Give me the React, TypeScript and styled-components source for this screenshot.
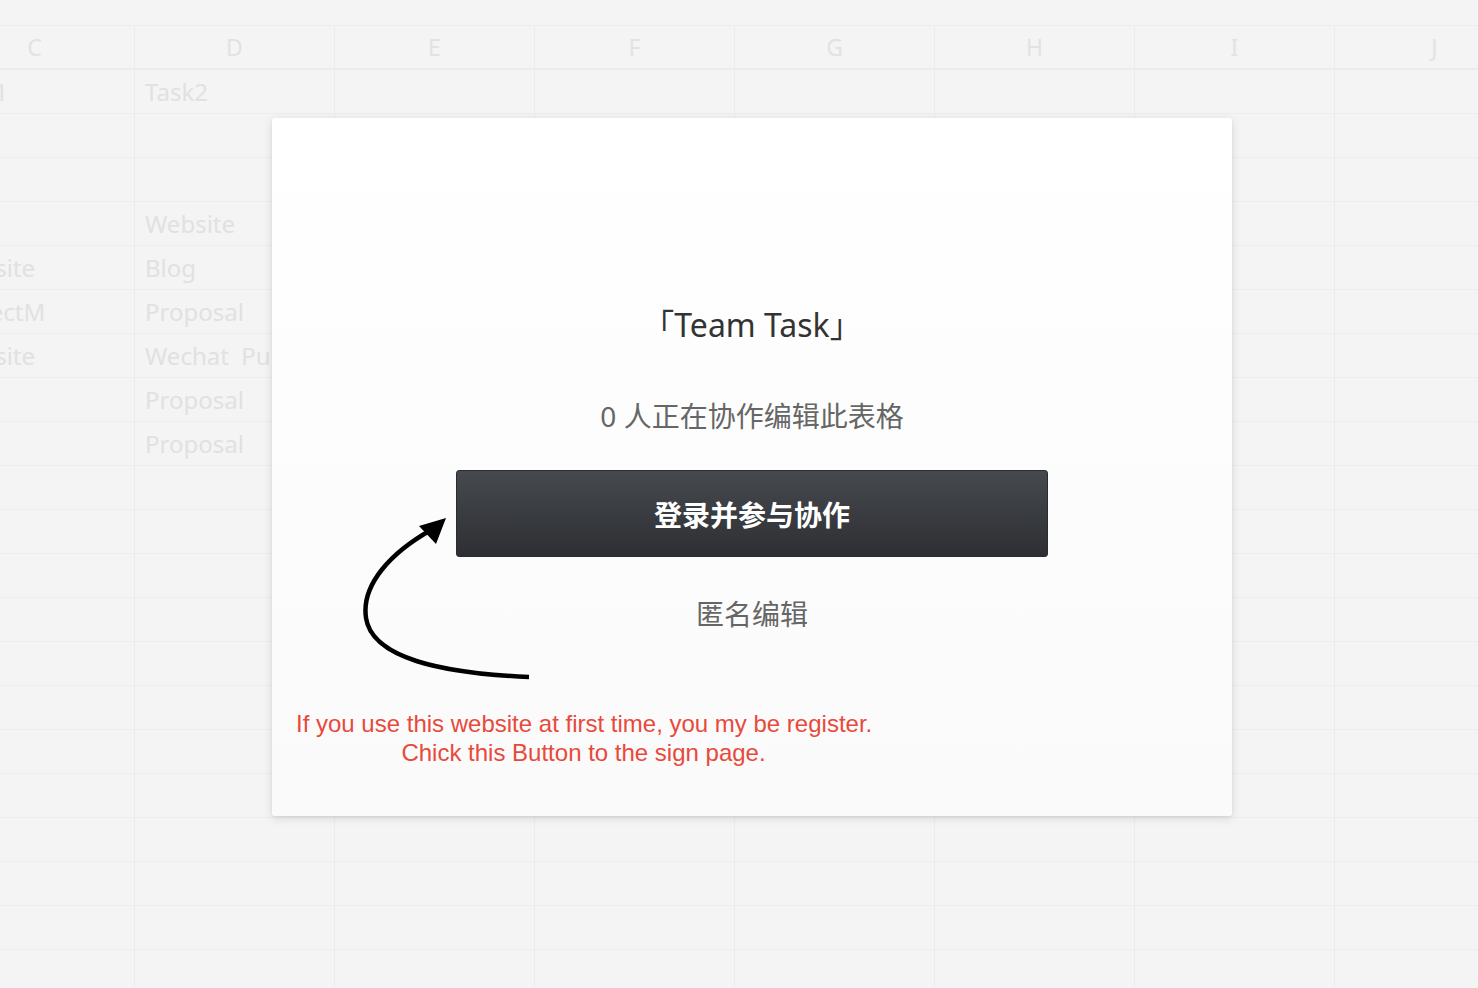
import React from "react";
import styled, { createGlobalStyle } from "styled-components";

const GlobalStyle = createGlobalStyle`
  html, body {
    margin: 0;
    padding: 0;
    background: #f4f4f4;
    overflow: hidden;
  }
  #root {
    width: 1478px;
    height: 988px;
  }
`;

const Page = styled.div`
  position: relative;
  width: 1478px;
  height: 988px;
  overflow: hidden;
  background: #f4f4f4;
  font-family: "Noto Sans", "Noto Sans CJK SC", sans-serif;
`;

const Sheet = styled.div`
  display: flex;
  flex-direction: column;
  margin-left: -65px;
  width: 1600px;
`;

const TopBar = styled.div`
  height: 25px;
  border-bottom: 1px solid #ededed;
  background: #f4f4f4;
`;

const HeaderRow = styled.div`
  display: grid;
  grid-template-columns: repeat(8, 200px);
  height: 42px;
  border-bottom: 2px solid #ebebeb;
`;

const HeaderCell = styled.div`
  display: flex;
  align-items: center;
  justify-content: center;
  border-right: 1px solid #ececec;
  color: #e2e2e2;
  font-size: 23px;
`;

const Row = styled.div`
  display: grid;
  grid-template-columns: repeat(8, 200px);
  height: 43px;
  border-bottom: 1px solid #ededed;
`;

const Cell = styled.div`
  display: flex;
  align-items: center;
  padding-left: 10px;
  border-right: 1px solid #ececec;
  color: #e1e1e1;
  font-size: 24px;
  white-space: pre;
  overflow: hidden;
`;

const Modal = styled.div`
  position: absolute;
  left: 272px;
  top: 118px;
  width: 960px;
  height: 698px;
  box-sizing: border-box;
  border-radius: 3px;
  background: linear-gradient(180deg, #ffffff 0%, #fafafa 100%);
  box-shadow: 0 2px 10px rgba(0, 0, 0, 0.13), 0 1px 2px rgba(0, 0, 0, 0.06);
  display: flex;
  flex-direction: column;
  align-items: center;
  padding-top: 187px;
  font-family: "Noto Sans", "Noto Sans CJK SC", sans-serif;
`;

const Title = styled.div`
  font-size: 32px;
  line-height: 40px;
  color: #333;
`;

const Subtitle = styled.div`
  margin-top: 51px;
  font-size: 28px;
  line-height: 40px;
  color: #666;
`;

const PrimaryButton = styled.button`
  margin-top: 34px;
  width: 592px;
  height: 87px;
  border: 1px solid #2a2c30;
  border-radius: 3px;
  background: linear-gradient(180deg, #46494e 0%, #2d2f33 100%);
  color: #fff;
  font-family: "Noto Sans CJK SC", sans-serif;
  font-size: 28px;
  font-weight: 700;
  letter-spacing: 0;
  cursor: pointer;
`;

const Anonymous = styled.div`
  margin-top: 37px;
  font-size: 28px;
  line-height: 40px;
  color: #666;
`;

const Note = styled.div`
  align-self: flex-start;
  margin-left: 24px;
  margin-top: 75px;
  width: 575px;
  text-align: center;
  font-family: "Liberation Sans", Arial, sans-serif;
  font-size: 24px;
  line-height: 29px;
  color: #e8493b;
  white-space: nowrap;
`;

const ArrowLayer = styled.svg`
  position: absolute;
  left: 0;
  top: 0;
  width: 1478px;
  height: 988px;
  pointer-events: none;
`;

const columns = ["C", "D", "E", "F", "G", "H", "I", "J"];

const cellData: Record<number, [string, string]> = {
  0: ["Task1", "Task2"],
  3: ["", "Website"],
  4: ["Website", "Blog"],
  5: ["ProjectM", "Proposal"],
  6: ["Website", "Wechat  Public"],
  7: ["", "Proposal"],
  8: ["", "Proposal"],
};

export default function App() {
  const rows = Array.from({ length: 21 }, (_, i) => i);
  return (
    <Page>
      <GlobalStyle />
      <Sheet>
        <TopBar />
        <HeaderRow>
          {columns.map((c) => (
            <HeaderCell key={c}>{c}</HeaderCell>
          ))}
        </HeaderRow>
        {rows.map((r) => (
          <Row key={r}>
            {columns.map((c, ci) => (
              <Cell key={c}>{ci < 2 && cellData[r] ? cellData[r][ci] : ""}</Cell>
            ))}
          </Row>
        ))}
      </Sheet>

      <Modal>
        <Title>「Team Task」</Title>
        <Subtitle>0 人正在协作编辑此表格</Subtitle>
        <PrimaryButton>登录并参与协作</PrimaryButton>
        <Anonymous>匿名编辑</Anonymous>
        <Note>
          If you use this website at first time, you my be register.
          <br />
          Chick this Button to the sign page.
        </Note>
      </Modal>

      <ArrowLayer viewBox="0 0 1478 988">
        <path
          d="M 529 677 C 440 673, 372 658, 366 618 C 361 584, 392 552, 431 530"
          fill="none"
          stroke="#000"
          strokeWidth="4.5"
          strokeLinecap="butt"
        />
        <polygon points="446,518 419,526 436,544" fill="#000" />
      </ArrowLayer>
    </Page>
  );
}
